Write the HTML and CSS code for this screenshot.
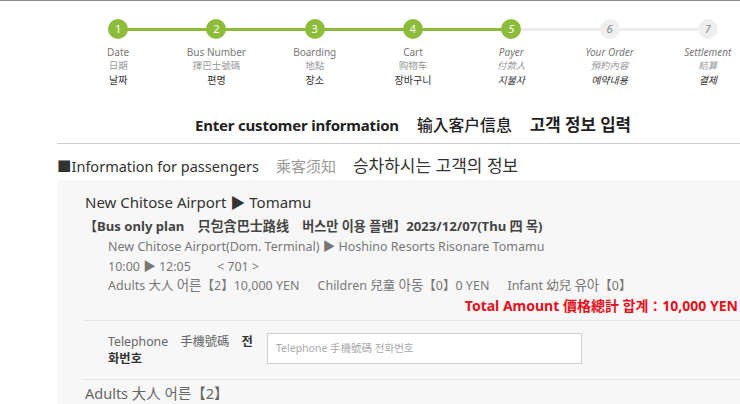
FILE: index.html
```html
<!DOCTYPE html>
<html lang="en">
<head>
<meta charset="utf-8">
<title>Enter customer information</title>
<link rel="stylesheet" href="styles.css">
</head>
<body>
<div class="topbar"></div>
<div class="page">
  <ol class="steps">
    <li class="step done">
      <span class="dot">1</span>
      <span class="en">Date</span><span class="zh">日期</span><span class="ko">날짜</span>
    </li>
    <li class="step done">
      <span class="dot">2</span>
      <span class="en">Bus Number</span><span class="zh">擇巴士號碼</span><span class="ko">편명</span>
    </li>
    <li class="step done">
      <span class="dot">3</span>
      <span class="en">Boarding</span><span class="zh">地點</span><span class="ko">장소</span>
    </li>
    <li class="step done">
      <span class="dot">4</span>
      <span class="en">Cart</span><span class="zh">购物车</span><span class="ko">장바구니</span>
    </li>
    <li class="step done current">
      <span class="dot">5</span>
      <span class="en">Payer</span><span class="zh">付款人</span><span class="ko">지불자</span>
    </li>
    <li class="step todo">
      <span class="dot">6</span>
      <span class="en">Your Order</span><span class="zh">預約內容</span><span class="ko">예약내용</span>
    </li>
    <li class="step todo">
      <span class="dot">7</span>
      <span class="en">Settlement</span><span class="zh">結算</span><span class="ko">결제</span>
    </li>
  </ol>

  <h1 class="title">Enter customer information<span class="gap"></span><span class="t-zh">输入客户信息</span><span class="gap"></span><span class="t-ko">고객 정보 입력</span></h1>
  <hr class="rule">

  <h2 class="section">■Information for passengers<span class="gap"></span><span class="muted">乘客须知</span><span class="gap"></span><span class="s-ko">승차하시는 고객의 정보</span></h2>

  <div class="card">
    <div class="route">New Chitose Airport ▶ Tomamu</div>
    <div class="plan">【Bus only plan　只包含巴士路线　버스만 이용 플랜】2023/12/07(Thu 四 목)</div>
    <div class="details">
      <div>New Chitose Airport(Dom. Terminal) ▶ Hoshino Resorts Risonare Tomamu</div>
      <div>10:00 ▶ 12:05<span class="wide"></span>&lt; 701 &gt;</div>
      <div>Adults 大人 <span class="k">어른</span>【2】10,000 YEN<span class="gap2"></span>Children 兒童 <span class="k">아동</span>【0】0 YEN<span class="gap2"></span>Infant 幼兒 <span class="k">유아</span>【0】</div>
    </div>
    <div class="total">Total Amount 價格總計 합계：10,000 YEN</div>

    <div class="field">
      <label class="label" for="tel">Telephone<span class="lg"></span>手機號碼<span class="lg"></span><b>전화번호</b></label>
      <input class="input" id="tel" type="text" placeholder="Telephone 手機號碼 전화번호">
    </div>

    <div class="group">Adults 大人 어른【2】</div>
  </div>
</div>
</body>
</html>
```
FILE: styles.css
```css
html { overflow: hidden; }
body {
  margin: 0;
  background: #fff;
  font-family: "Noto Sans", "Noto Sans CJK JP", sans-serif;
  color: #333;
}
.topbar { height: 1px; background: #8a8a8a; }

.page {
  margin-left: 57px;
  width: 712px;
}

/* stepper */
.steps {
  list-style: none;
  margin: 0;
  padding: 18px 12px 0;
  display: grid;
  grid-template-columns: repeat(7, 1fr);
}
.step {
  position: relative;
  display: flex;
  flex-direction: column;
  align-items: center;
  font-size: 10px;
  line-height: 14px;
}
.step + .step::before {
  content: "";
  position: absolute;
  top: 9px;
  left: -50%;
  width: 100%;
  height: 3px;
  background: #ececec;
}
.step.done + .step.done::before { background: #8dbb3a; }
.dot {
  position: relative;
  z-index: 1;
  width: 20px;
  height: 20px;
  border-radius: 50%;
  display: flex;
  align-items: center;
  justify-content: center;
  font-size: 11px;
  color: #fff;
  margin-bottom: 6px;
}
.done .dot { background: #8dbb3a; }
.todo .dot { background: #efefef; color: #888; font-style: italic; }
.current, .todo { font-style: italic; }
.en { color: #777; }
.zh { color: #999; font-size: 9.5px; }
.ko { color: #333; }

/* headings */
.title {
  margin: 28px 0 0;
  text-align: center;
  font-size: 15px;
  line-height: 20px;
  font-weight: 700;
  color: #222;
  letter-spacing: -0.2px;
}
.title .gap { display: inline-block; width: 18px; }
.t-zh { font-size: 15.8px; font-weight: 500; letter-spacing: 0; }
.t-ko { font-size: 16.8px; letter-spacing: 0; }
.rule {
  margin: 8px 0 0;
  border: 0;
  border-top: 1px solid #cfcfcf;
}
.section {
  margin: 11px 0 0;
  font-size: 14.5px;
  line-height: 22px;
  font-weight: 400;
  color: #333;
}
.section .gap { display: inline-block; width: 17px; }
.muted { color: #999; font-size: 15px; }
.s-ko { font-size: 17px; }

/* card */
.card {
  margin-top: 3px;
  background: #f7f7f7;
  padding: 11px 0 0 28px;
}
.route {
  font-size: 15px;
  line-height: 22px;
  color: #333;
}
.plan {
  margin-top: 2px;
  font-size: 13.1px;
  line-height: 22px;
  font-weight: 700;
  color: #444;
  margin-left: -1px;
}
.details {
  padding-left: 23px;
  font-size: 12.5px;
  line-height: 19.5px;
  color: #777;
}
.k { font-size: 13.5px; }
.wide { display: inline-block; width: 26px; }
.gap2 { display: inline-block; width: 18px; }
.total {
  text-align: right;
  font-size: 14px;
  line-height: 19px;
  font-weight: 700;
  color: #e5101b;
  padding-right: 31px;
}
.field {
  margin-top: 5px;
  margin-left: -2px;
  border-top: 1px solid #e6e6e6;
  border-bottom: 1px solid #e6e6e6;
  padding: 12px 0 12px 25px;
  display: flex;
  align-items: flex-start;
  gap: 8px;
}
.label {
  width: 151px;
  flex: none;
  font-size: 12.3px;
  line-height: 17px;
  color: #666;
  word-break: break-all;
}
.lg { display: inline-block; width: 12px; }
.label b { color: #333; }
.input {
  width: 315px;
  height: 31px;
  box-sizing: border-box;
  border: 1px solid #cfcfcf;
  background: #fff;
  padding: 0 8px;
  font-family: inherit;
  font-size: 10.5px;
  color: #333;
  margin: 0;
}
.input::placeholder { color: #aaa; }
.group {
  padding: 3px 0 10px;
  font-size: 14.5px;
  line-height: 20px;
  color: #666;
}
```
